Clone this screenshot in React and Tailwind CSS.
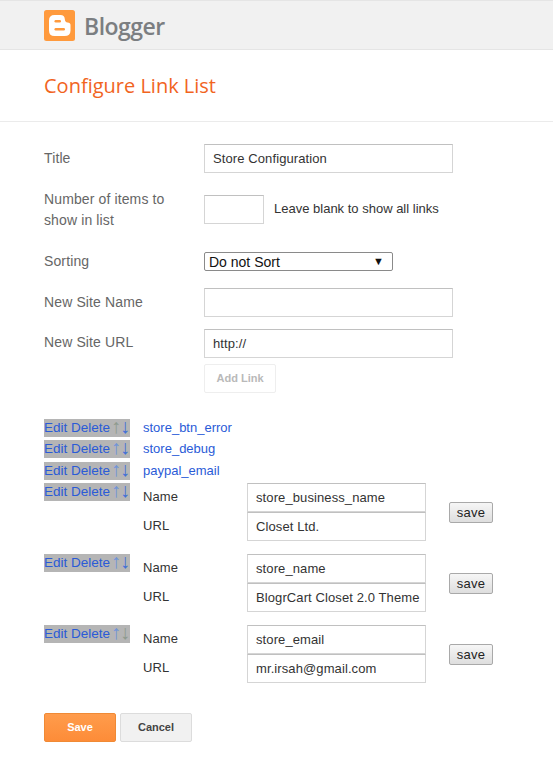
const sans = "font-['Liberation_Sans',Arial,sans-serif]";

function Field({ value = "", w = "w-[249px]" }) {
  return (
    <div className={`${w} h-[29px] border border-[#d5d5d5] border-t-[#c0c0c0] bg-white px-2 text-[13px] leading-[27px] tracking-[0.1px] text-[#333] overflow-hidden whitespace-nowrap`}>
      {value}
    </div>
  );
}

function Row({ label, children, className = "" }) {
  return (
    <div className={`flex ${className}`}>
      <div className="w-[160px] shrink-0 text-[14px] leading-[21px] tracking-[0.12px] text-[#666]">{label}</div>
      {children}
    </div>
  );
}

function Actions({ first, last }) {
  return (
    <div className="flex w-[86px] h-[18px] shrink-0 bg-[#b5b5b5] text-[13.5px] leading-[18px] text-[#2a5bd7] whitespace-nowrap overflow-hidden">
      <span>Edit Delete</span>
      <span className={`ml-[1px] text-[20px] leading-[15px] font-['Liberation_Sans',sans-serif] ${first ? "text-[#8e9a8e]" : "text-[#6f93d9]"}`}>↑</span>
      <span className={`-ml-[1px] text-[20px] leading-[15px] ${last ? "text-[#8e9a8e]" : "text-[#3f6fd8]"}`}>↓</span>
    </div>
  );
}

function SimpleLink({ name, first }) {
  return (
    <div className="flex h-[21.34px]">
      <Actions first={first} />
      <div className="ml-[13px] text-[13px] leading-[18px] text-[#2a5bd7]">{name}</div>
    </div>
  );
}

function EditLink({ name, url, last }) {
  return (
    <div className="flex h-[71px]">
      <Actions last={last} />
      <div className="ml-[13px] w-[104px] pt-[5px] text-[13px] tracking-[0.1px] text-[#333]">
        <div className="h-[29px] leading-[18px]">Name</div>
        <div className="leading-[18px]">URL</div>
      </div>
      <div className="flex flex-col">
        <Field value={name} w="w-[179px]" />
        <Field value={url} w="w-[179px]" />
      </div>
      <div className="ml-[23px] mt-[19px] flex h-[21px] w-[44px] items-center justify-center rounded-[2px] border border-[#a9a9a9] bg-[linear-gradient(#f6f6f6,#dedede)] text-[13px] tracking-[0.2px] text-[#222]">
        save
      </div>
    </div>
  );
}

export default function App() {
  return (
    <div className={`${sans} h-[776px] w-[553px] overflow-hidden bg-white`}>
      <header className="flex h-[50px] items-center border-y border-[#e5e5e5] bg-[#f1f1f1] pl-[44px]">
        <svg width="31" height="31" viewBox="0 0 31 31" className="shrink-0">
          <rect width="31" height="31" rx="2.5" fill="#ff9a3d" />
          <path d="M10.5 5 H16.5 Q20.5 5 20.8 9 Q21 12.3 23.5 12.5 Q26.5 12.5 26.5 15 V20.5 Q26.5 26 20.5 26 H10.5 Q5 26 5 20.5 V10.5 Q5 5 10.5 5 Z" fill="#fff" />
          <rect x="10.5" y="10" width="6.5" height="2.4" rx="1.2" fill="#ff9a3d" />
          <rect x="10.5" y="18" width="10.5" height="2.4" rx="1.2" fill="#ff9a3d" />
        </svg>
        <span className="ml-[9px] mt-[2px] font-['Open_Sans',sans-serif] text-[23px] font-semibold leading-none text-[#7b7e81] tracking-[-0.5px]">Blogger</span>
      </header>

      <div className="flex h-[72px] items-center border-b border-[#ebebeb] pl-[44px]">
        <h1 className="font-['Open_Sans',sans-serif] text-[20px] font-normal text-[#f1641e]">Configure Link List</h1>
      </div>

      <main className="px-[44px] pt-[22px]">
        <Row label={<div className="pt-[4px]">Title</div>}>
          <Field value="Store Configuration" />
        </Row>
        <Row label={<div className="-mt-[6px] w-[130px]">Number of items to show in list</div>} className="mt-[22px] h-[42px]">
          <Field w="w-[60px]" />
          <div className="ml-[10px] pt-[3px] text-[13px] leading-[21px] text-[#333]">Leave blank to show all links</div>
        </Row>
        <Row label={<div className="-mt-[1px]">Sorting</div>} className="mt-[15px] h-[19px]">
          <div className="flex h-[19px] w-[189px] items-center justify-between rounded-[2px] border border-[#8a8a8a] bg-white pl-[4px] pr-[8px] text-[14px] leading-none text-[#111]">
            <span>Do not Sort</span>
            <span className="text-[11px]">▼</span>
          </div>
        </Row>
        <Row label={<div className="pt-[4px]">New Site Name</div>} className="mt-[17px]">
          <Field />
        </Row>
        <Row label={<div className="pt-[3px]">New Site URL</div>} className="mt-[12px]">
          <Field value="http://" />
        </Row>
        <div className="ml-[160px] mt-[6px] flex h-[29px] w-[72px] items-center justify-center rounded-[2px] border border-[#eeeeee] text-[11px] font-bold text-[#b9b9b9]">
          Add Link
        </div>

        <section className="mt-[26px]">
          <SimpleLink name="store_btn_error" first />
          <SimpleLink name="store_debug" />
          <SimpleLink name="paypal_email" />
          <EditLink name="store_business_name" url="Closet Ltd." />
          <EditLink name="store_name" url="BlogrCart Closet 2.0 Theme" />
          <EditLink name="store_email" url="mr.irsah@gmail.com" last />
        </section>

        <div className="mt-[17px] flex gap-[4px]">
          <div className="flex h-[29px] w-[72px] items-center justify-center rounded-[2px] border border-[#f08a35] bg-[linear-gradient(#ff9c4c,#fd8c38)] text-[11px] font-bold text-white">
            Save
          </div>
          <div className="flex h-[29px] w-[72px] items-center justify-center rounded-[2px] border border-[#dcdcdc] bg-[#f1f1f1] text-[11px] font-bold text-[#444]">
            Cancel
          </div>
        </div>
      </main>
    </div>
  );
}
